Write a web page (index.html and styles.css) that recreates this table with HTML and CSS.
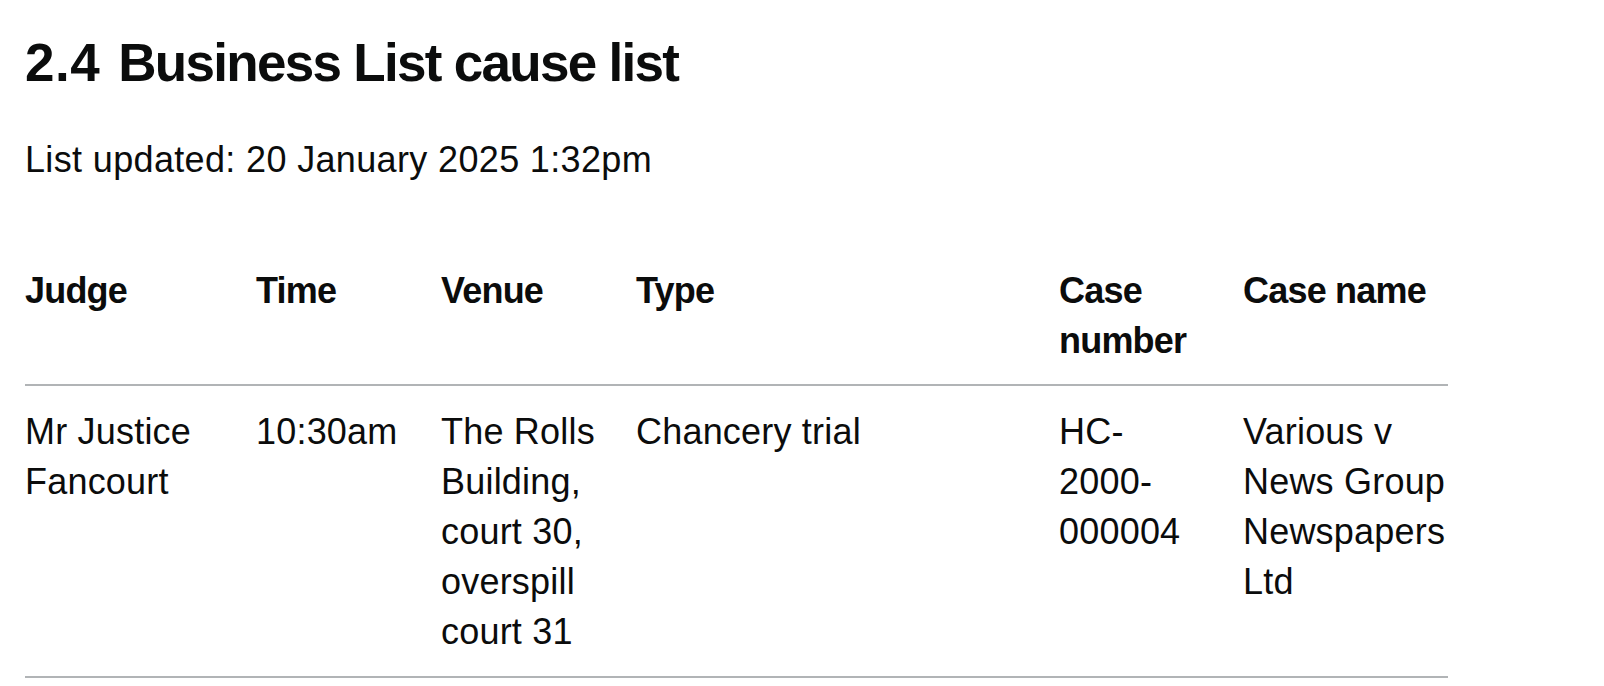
FILE: index.html
```html
<!DOCTYPE html>
<html lang="en">
<head>
<meta charset="utf-8">
<title>2.4 Business List cause list</title>
<link rel="stylesheet" href="styles.css">
</head>
<body>
<main class="page">
  <h1 class="heading"><span class="heading-num">2.4</span> Business List cause list</h1>
  <p class="updated">List updated: 20 January 2025 1:32pm</p>
  <table class="cause-table">
    <thead>
      <tr>
        <th class="col-judge">Judge</th>
        <th class="col-time">Time</th>
        <th class="col-venue">Venue</th>
        <th class="col-type">Type</th>
        <th class="col-number">Case number</th>
        <th class="col-name">Case name</th>
      </tr>
    </thead>
    <tbody>
      <tr>
        <td>Mr Justice Fancourt</td>
        <td>10:30am</td>
        <td>The Rolls Building, court 30, overspill court 31</td>
        <td>Chancery trial</td>
        <td>HC-2000-000004</td>
        <td>Various v News Group Newspapers Ltd</td>
      </tr>
    </tbody>
  </table>
</main>
</body>
</html>
```

FILE: styles.css
```css
html, body {
  margin: 0;
  padding: 0;
  background: #ffffff;
}

body {
  font-family: "Liberation Sans", Arial, sans-serif;
  color: #0b0c0c;
}

.page {
  padding: 33px 25px 0 25px;
}

.heading {
  margin: 0 0 42px 0;
  font-size: 53px;
  line-height: 60px;
  font-weight: 700;
  letter-spacing: -1.7px;
}

.heading-num {
  letter-spacing: 0.5px;
  margin-right: 5px;
}

.updated {
  margin: 0 0 54px 0;
  font-size: 36px;
  line-height: 50px;
  letter-spacing: 0.35px;
}

.cause-table {
  width: 1423px;
  table-layout: fixed;
  border-collapse: collapse;
  border-spacing: 0;
  font-size: 36px;
  line-height: 50px;
}

.cause-table th,
.cause-table td {
  text-align: left;
  vertical-align: top;
  border-bottom: 2px solid #b1b4b6;
  padding-right: 40px;
  padding-left: 0;
}

.cause-table th {
  font-weight: 700;
  letter-spacing: -0.8px;
  padding-top: 27px;
  padding-bottom: 18px;
}

.cause-table td {
  font-weight: 400;
  letter-spacing: 0.2px;
  padding-top: 21px;
  padding-bottom: 19px;
}

.cause-table th:last-child,
.cause-table td:last-child {
  padding-right: 0;
}

.col-judge { width: 191px; }
.col-time { width: 145px; }
.col-venue { width: 155px; }
.col-type { width: 383px; }
.col-number { width: 144px; }
.col-name { width: 205px; }
```
